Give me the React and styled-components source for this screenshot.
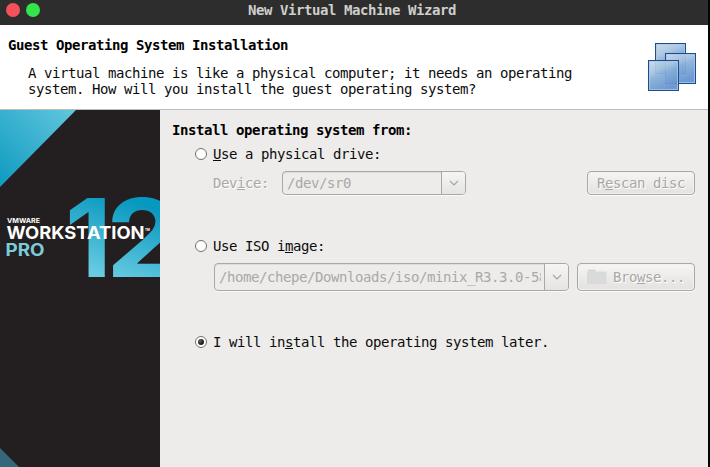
import React from "react";
import styled, { createGlobalStyle } from "styled-components";

const GlobalStyle = createGlobalStyle`
  *, *::before, *::after { box-sizing: border-box; }
  html, body { margin: 0; padding: 0; background: #000; overflow: hidden; }
`;

const Window = styled.div`
  width: 710px;
  height: 467px;
  display: flex;
  flex-direction: column;
  border-right: 2px solid #050505;
  background: #edecea;
  font-family: "DejaVu Sans Mono", "Liberation Mono", monospace;
  font-size: 14px;
  letter-spacing: -0.4287px;
  line-height: 16px;
  color: #0c0c0c;
  white-space: pre;
`;

const TitleBar = styled.header`
  flex: none;
  height: 25px;
  display: grid;
  grid-template-columns: 60px 1fr 64px;
  background: #2d2d2d;
`;

const WindowControls = styled.div`
  display: flex;
  gap: 6px;
  padding: 3px 0 0 6px;
`;

const ControlDot = styled.span`
  width: 14px;
  height: 14px;
  border-radius: 50%;
  background: ${({ $color }) => $color};
`;

const WindowTitle = styled.div`
  padding-top: 2px;
  text-align: center;
  font-weight: bold;
  color: #d0cfcb;
`;

const Banner = styled.section`
  flex: none;
  height: 85px;
  display: flex;
  justify-content: space-between;
  padding: 12px 12px 0 8px;
  background: #fff;
  border-bottom: 1px solid #bcbcb8;
`;

const BannerTitle = styled.h1`
  margin: 0;
  padding-top: 0;
  font-size: inherit;
  color: #000;
`;

const BannerText = styled.p`
  margin: 12px 0 0 20px;
`;

const BannerIcon = styled.svg`
  flex: none;
  width: 48px;
  height: 48px;
  margin-top: 6px;
`;

const Body = styled.div`
  flex: 1;
  display: flex;
  min-height: 0;
`;

const Sidebar = styled.aside`
  flex: none;
  width: 160px;
  background: #231f20;
  overflow: hidden;

  svg { display: block; letter-spacing: 0; }
`;

const Form = styled.main`
  flex: 1;
  min-width: 0;
  padding: 12px 13px 0 12px;
`;

const FormTitle = styled.h2`
  margin: 0;
  height: 16px;
  font-size: inherit;
  color: #000;
`;

const RadioRow = styled.label`
  display: flex;
  align-items: center;
  gap: 6px;
  height: 16px;
  margin-top: ${({ $top }) => $top}px;
  padding-left: 23px;
`;

const RadioMark = styled.span`
  width: 12px;
  height: 12px;
  display: grid;
  place-items: center;
  border: 1px solid #73716f;
  border-radius: 50%;
  background: #fff;

  &::after {
    content: "";
    width: 6px;
    height: 6px;
    border-radius: 50%;
    background: ${({ $checked }) =>
      $checked ? "radial-gradient(circle at 35% 35%, #666, #1c1c1c 55%)" : "none"};
  }
`;

const Mnemonic = styled.span`
  height: 15px;
  display: inline-block;
  line-height: 16px;
  vertical-align: top;
  border-bottom: 1px solid currentColor;
`;

const FieldRow = styled.div`
  display: flex;
  align-items: center;
  height: ${({ $height }) => $height}px;
  margin-top: ${({ $top }) => $top}px;
  padding-left: ${({ $indent }) => $indent}px;
  color: #aaa8a5;
`;

const FieldLabel = styled.span`
  width: 69px;
  text-shadow: 1px 1px 0 #fff;
`;

const Combo = styled.div`
  width: ${({ $width }) => $width}px;
  height: 100%;
  display: flex;
  border: 1px solid #a9a8a4;
  border-radius: 4px;
  box-shadow: 0 1px 0 #f9f9f8, inset 0 1px 0 #dedddb;
  overflow: hidden;
`;

const ComboValue = styled.div`
  flex: 1;
  min-width: 0;
  display: flex;
  align-items: center;
  margin: 0 3px 0 4px;
  overflow: hidden;
`;

const ComboArrow = styled.div`
  flex: none;
  width: 24px;
  display: grid;
  place-items: center;
  border-left: 1px solid #a9a8a4;
  background: linear-gradient(#f5f5f4, #e5e4e2);
`;

const Button = styled.button`
  width: ${({ $width }) => $width}px;
  height: 100%;
  margin: 0 0 0 auto;
  padding: 0;
  display: flex;
  align-items: center;
  justify-content: center;
  gap: 6px;
  border: 1px solid #a9a8a4;
  border-radius: 4px;
  background: linear-gradient(#f6f6f5, #ecebe9 50%, #e3e2e0);
  box-shadow: 0 1px 0 #fafafa, inset 0 0 0 1px #f1f1ef;
  color: inherit;
  font: inherit;
  letter-spacing: inherit;
  text-shadow: 1px 1px 0 #fff;
`;

const ArrowGlyph = () => (
  <svg width="10" height="6" viewBox="0 0 10 6">
    <path d="M1 1 L5 5 L9 1" fill="none" stroke="#a5a4a0" strokeWidth="1.1" />
  </svg>
);

const FolderGlyph = () => (
  <svg width="20" height="16" viewBox="0 0 20 16">
    <path d="M1 1.5 Q1 .8 1.8 .8 H8 L9 2.5 H1Z" fill="#ced1d1" />
    <path d="M0 2.5 H19.5 V15 H0Z" fill="#d9dbdb" />
  </svg>
);

const tiles = [
  [7, 0],
  [17, 10],
  [0, 17],
];

const MachinesIcon = () => (
  <BannerIcon viewBox="0 0 48 48">
    <defs>
      <linearGradient id="tile" x1="0" y1="0" x2=".45" y2="1">
        <stop offset="0" stopColor="#cddbe9" />
        <stop offset=".38" stopColor="#a6c3e0" />
        <stop offset=".55" stopColor="#86aeda" />
        <stop offset="1" stopColor="#6393cc" />
      </linearGradient>
    </defs>
    {tiles.map(([x, y]) => (
      <g key={x} transform={`translate(${x} ${y})`}>
        <rect x=".5" y=".5" width="30" height="30" fill="url(#tile)" fillOpacity=".93" stroke="#1d4d91" />
        <rect x="1.5" y="1.5" width="28" height="28" fill="none" stroke="#a9c7e7" strokeOpacity=".8" />
      </g>
    ))}
  </BannerIcon>
);

const ProductArt = () => (
  <svg width="160" height="357" viewBox="0 0 160 357">
    <defs>
      <linearGradient id="corner" gradientUnits="userSpaceOnUse" x1="0" y1="70" x2="70" y2="0">
        <stop offset="0" stopColor="#129cc1" />
        <stop offset="1" stopColor="#5fc5dd" />
      </linearGradient>
      <linearGradient id="digits" gradientUnits="userSpaceOnUse" x1="135" y1="92" x2="110" y2="167">
        <stop offset="0" stopColor="#0798c0" />
        <stop offset="1" stopColor="#67cbe1" />
      </linearGradient>
    </defs>
    <path d="M0 0 H76 L0 77Z" fill="url(#corner)" />
    <path d="M0 338 L19 357 H0Z" fill="#34677a" />
    <g fontFamily="Inter, sans-serif" fontWeight="700">
      <g fontSize="108.7" fontWeight="700" fill="url(#digits)">
        <text x="65" y="167">1</text>
        <text x="106" y="167" textLength="74" lengthAdjust="spacingAndGlyphs">2</text>
      </g>
      <text x="7" y="112.6" fontSize="6.2" fill="#fff" textLength="33" lengthAdjust="spacingAndGlyphs">VMWARE</text>
      <text x="6.5" y="129" fontSize="17.4" fill="#fff" textLength="138" lengthAdjust="spacingAndGlyphs">WORKSTATION</text>
      <text x="145" y="121" fontSize="3" fill="#fff">TM</text>
      <text x="5.5" y="146" fontSize="17" fill="#7ccbdc" textLength="39" lengthAdjust="spacingAndGlyphs">PRO</text>
    </g>
  </svg>
);

export default function App() {
  return (
    <>
      <GlobalStyle />
      <Window>
        <TitleBar>
          <WindowControls>
            <ControlDot $color="#f4515a" />
            <ControlDot $color="#35e34b" />
          </WindowControls>
          <WindowTitle>New Virtual Machine Wizard</WindowTitle>
        </TitleBar>
        <Banner>
          <div>
            <BannerTitle>Guest Operating System Installation</BannerTitle>
            <BannerText>
              {"A virtual machine is like a physical computer; it needs an operating\nsystem. How will you install the guest operating system?"}
            </BannerText>
          </div>
          <MachinesIcon />
        </Banner>
        <Body>
          <Sidebar>
            <ProductArt />
          </Sidebar>
          <Form>
            <FormTitle>Install operating system from:</FormTitle>
            <RadioRow $top={8}>
              <RadioMark />
              <span><Mnemonic>U</Mnemonic>se a physical drive:</span>
            </RadioRow>
            <FieldRow $top={9} $height={24} $indent={41}>
              <FieldLabel>Dev<Mnemonic>i</Mnemonic>ce:</FieldLabel>
              <Combo $width={184}>
                <ComboValue>/dev/sr0</ComboValue>
                <ComboArrow><ArrowGlyph /></ComboArrow>
              </Combo>
              <Button $width={108}>
                <span>R<Mnemonic>e</Mnemonic>scan disc</span>
              </Button>
            </FieldRow>
            <RadioRow $top={43}>
              <RadioMark />
              <span>Use ISO i<Mnemonic>m</Mnemonic>age:</span>
            </RadioRow>
            <FieldRow $top={9} $height={28} $indent={42}>
              <Combo $width={355}>
                <ComboValue>/home/chepe/Downloads/iso/minix_R3.3.0-588</ComboValue>
                <ComboArrow><ArrowGlyph /></ComboArrow>
              </Combo>
              <Button $width={118}>
                <FolderGlyph />
                <span>Bro<Mnemonic>w</Mnemonic>se...</span>
              </Button>
            </FieldRow>
            <RadioRow $top={43}>
              <RadioMark $checked />
              <span>I will in<Mnemonic>s</Mnemonic>tall the operating system later.</span>
            </RadioRow>
          </Form>
        </Body>
      </Window>
    </>
  );
}
